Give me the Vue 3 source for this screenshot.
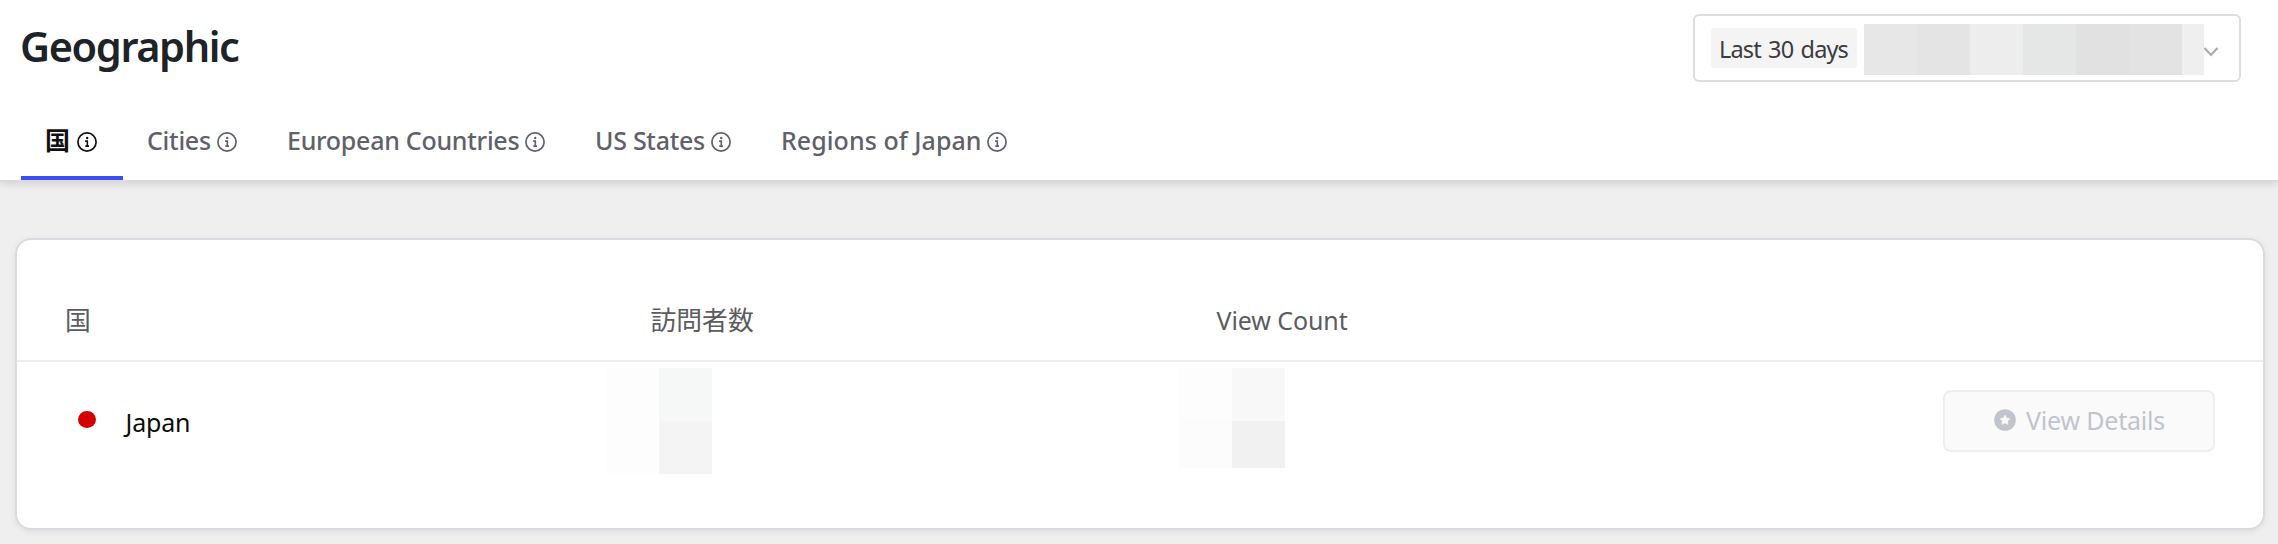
<script setup>
const tabs = [
  { label: '国', size: 'country', active: true },
  { label: 'Cities', size: 'cities' },
  { label: 'European Countries', size: 'europe' },
  { label: 'US States', size: 'states' },
  { label: 'Regions of Japan', size: 'regions' },
]
const rangeCells = ['a', 'b', 'c', 'd', 'e', 'f', 'g']
</script>

<template>
  <div class="page">
    <header class="top">
      <div class="title-row">
        <h1>Geographic</h1>
        <div class="select">
          <span class="chip"><span class="chip-text">Last 30 days</span></span>
          <span class="range">
            <i v-for="c in rangeCells" :key="c" :class="'r-' + c"></i>
          </span>
          <svg class="chevron" width="16" height="12" viewBox="0 0 16 12">
            <path d="M1.5 2 L8 9 L14.5 2" fill="none" stroke="#a9abb0" stroke-width="2.2" />
          </svg>
        </div>
      </div>
      <nav class="tabs">
        <div v-for="t in tabs" :key="t.label" class="tab" :class="[t.size, { active: t.active }]">
          <span class="tab-label">{{ t.label }}</span>
          <svg class="info" width="20" height="20" viewBox="0 0 20 20">
            <circle cx="10" cy="10" r="9.1" fill="none" stroke="currentColor" stroke-width="1.7" />
            <circle cx="10.2" cy="6" r="1.2" fill="currentColor" />
            <path d="M8.1 9.1 H10.3 V14 M8.3 14.1 H12" fill="none" stroke="currentColor" stroke-width="1.6" />
          </svg>
        </div>
      </nav>
    </header>

    <main class="card">
      <div class="row head">
        <span>国</span>
        <span>訪問者数</span>
        <span class="views">View Count</span>
      </div>
      <div class="row body">
        <div class="country-cell">
          <i class="dot"></i>
          <span class="name">Japan</span>
        </div>
        <div class="mosaic visitors"><i></i><i></i><i></i><i></i></div>
        <div class="mosaic counts"><i></i><i></i><i></i><i></i></div>
        <button class="details" disabled>
          <svg width="22" height="22" viewBox="0 0 22 22">
            <circle cx="11" cy="11" r="10.8" fill="#c0c4cc" />
            <path
              d="M11 6.2 L12.5 9.2 L15.8 9.7 L13.4 12 L14 15.3 L11 13.8 L8 15.3 L8.6 12 L6.2 9.7 L9.5 9.2 Z"
              fill="#fafafa" stroke="#fafafa" stroke-width="0.8" stroke-linejoin="round"
            />
          </svg>
          <span>View Details</span>
        </button>
      </div>
    </main>
  </div>
</template>

<style>
body {
  margin: 0;
}
</style>

<style scoped>
.page {
  box-sizing: border-box;
  width: 2278px;
  height: 544px;
  overflow: hidden;
  background: #efefef;
  font-family: "Noto Sans", "Noto Sans CJK JP", sans-serif;
  font-size: 25px;
  color: #5c5c5f;
}
.top {
  box-sizing: border-box;
  height: 182px;
  background: #fff;
  border-bottom: 2px solid #dadade;
  box-shadow: 0 2px 8px rgba(0, 0, 0, 0.12);
}
.title-row {
  display: flex;
  justify-content: space-between;
  align-items: flex-start;
  box-sizing: border-box;
  height: 104px;
  padding: 14px 37px 0 20px;
}
h1 {
  margin: 0;
  font-size: 41.5px;
  line-height: 64px;
  font-weight: 600;
  letter-spacing: -1.4px;
  color: #1d2327;
}
.select {
  box-sizing: border-box;
  display: flex;
  width: 548px;
  height: 68px;
  padding: 8px 0 0 16px;
  border: 2px solid #dcdce1;
  border-radius: 6px;
  background: #fff;
}
.chip {
  box-sizing: border-box;
  width: 146px;
  height: 40px;
  margin-top: 4px;
  padding-left: 8px;
  border-radius: 4px;
  background: #f4f4f4;
  color: #3c3c3e;
  font-size: 23.5px;
  line-height: 42px;
  letter-spacing: -0.85px;
  word-spacing: 2px;
  white-space: nowrap;
}
.range {
  display: grid;
  grid-template-columns: repeat(6, 53px) 22px;
  height: 51px;
  margin-left: 7px;
}
.r-a { background: #e7e7e7; }
.r-b { background: #e4e4e4; }
.r-c { background: #ededed; }
.r-d { background: #e4e7e5; }
.r-e { background: #e1e1e1; }
.r-f { background: #e3e3e3; }
.r-g { background: #efefef; }
.chevron {
  margin: 22px 0 0 -1px;
}
.tabs {
  display: flex;
  height: 76px;
  padding-left: 21px;
}
.tab {
  box-sizing: border-box;
  display: flex;
  justify-content: space-between;
  padding: 0 26px 0 24px;
  border-bottom: 4px solid transparent;
  font-size: 25px;
  line-height: 72px;
  font-weight: 500;
  letter-spacing: -0.27px;
  white-space: nowrap;
  color: #5f616a;
}
.tab.active {
  border-bottom-color: #3e4cf5;
  color: #111;
  font-weight: 600;
}
.country { width: 102px; }
.cities { width: 140px; }
.europe { width: 308px; }
.states { width: 186px; }
.regions {
  width: 276px;
  letter-spacing: 0.05px;
}
.info {
  flex: none;
  margin-top: 28px;
}
.card {
  box-sizing: border-box;
  width: 2250px;
  height: 292px;
  margin: 56px 0 0 15px;
  border: 2px solid #dadae0;
  border-radius: 16px;
  background: #fff;
  box-shadow: 0 2px 6px rgba(0, 0, 0, 0.07);
}
.row {
  display: grid;
  grid-template-columns: 585.5px 566px 1fr;
}
.head {
  box-sizing: border-box;
  height: 122px;
  padding: 62px 0 0 48px;
  border-bottom: 2px solid #eee;
  font-size: 25.8px;
  line-height: 37px;
}
.views {
  font-size: 25px;
  letter-spacing: -0.1px;
}
.body {
  grid-template-columns: 589px 573px 764px 272px;
  align-items: start;
}
.country-cell {
  display: flex;
  padding: 42px 0 0 61px;
}
.dot {
  width: 18px;
  height: 17px;
  margin-top: 6.5px;
  border-radius: 50%;
  background: #d30000;
}
.name {
  margin-left: 29.5px;
  line-height: 37px;
  letter-spacing: -0.2px;
  color: #0c0c0c;
}
.mosaic {
  display: grid;
  grid-template-columns: 53px 53px;
  grid-template-rows: 53px 53px;
  margin-top: 6px;
}
.counts {
  grid-template-rows: 53px 47px;
}
.visitors i { background: #fdfdfd; }
.visitors i:nth-child(2) { background: #f6f8f7; }
.visitors i:nth-child(4) { background: #f4f4f4; }
.counts i { background: #fdfdfd; }
.counts i:nth-child(2) { background: #f8f8f8; }
.counts i:nth-child(3) { background: #fcfcfc; }
.counts i:nth-child(4) { background: #f1f1f1; }
.details {
  box-sizing: border-box;
  display: flex;
  width: 272px;
  height: 62px;
  margin: 28px 0 0;
  padding: 0 0 0 49px;
  border: 2px solid #eeeeef;
  border-radius: 8px;
  background: #fafafa;
  font: 25px/57px "Noto Sans", sans-serif;
  letter-spacing: -0.2px;
  color: #c0c4cc;
  white-space: nowrap;
}
.details svg {
  flex: none;
  margin: 17px 10px 0 0;
}
</style>
